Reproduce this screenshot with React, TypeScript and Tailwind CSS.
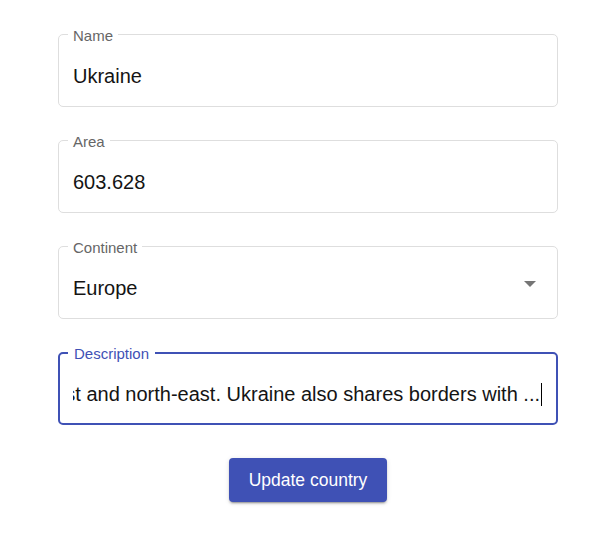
import { useState } from "react";

const fields = [
  { label: "Name", value: "Ukraine" },
  { label: "Area", value: "603.628" },
];

const description =
  "Ukraine is a country in Eastern Europe. It is the second-largest country in Europe after Russia, which borders it to the east and north-east. Ukraine also shares borders with ...";

const Field = ({ label, children, focused }: { label: string; children: React.ReactNode; focused?: boolean }) => {
  return (
    <div
      className={
        focused
          ? "relative h-[73px] rounded-[5px] border-2 border-[#3f51b5] pl-[13px] pr-[14px] pt-[28px]"
          : "relative h-[73px] rounded-[5px] border border-[#dedede] pl-[14px] pr-[15px] pt-[29px]"
      }
    >
      <label
        className={
          focused
            ? "absolute left-[8px] top-[-9px] bg-white px-[6px] text-[15px] leading-[18px] text-[#3f51b5]"
            : "absolute left-[9px] top-[-8px] bg-white px-[5px] text-[15px] leading-[18px] text-[#666666]"
        }
      >
        {label}
      </label>
      {children}
    </div>
  );
};

export default function App() {
  const [continent] = useState("Europe");
  return (
    <main className="min-h-[538px] bg-white pt-[34px] font-['Liberation_Sans',Arial,sans-serif]">
      <form className="ml-[58px] flex w-[500px] flex-col gap-[33px]">
        {fields.map((f) => (
          <Field key={f.label} label={f.label}>
            <div className="text-[20px] leading-[24px] text-[#141414]">{f.value}</div>
          </Field>
        ))}

        <Field label="Continent">
          <div className="flex items-center justify-between">
            <div className="text-[20px] leading-[24px] text-[#141414]">{continent}</div>
            <svg width="12" height="6" viewBox="0 0 12 6" className="mr-[6px] mt-[-9px]">
              <polygon points="0,0 12,0 6,6" fill="#757575" />
            </svg>
          </div>
        </Field>

        <Field label="Description" focused>
          <div className="flex items-center">
            <div className="flex flex-1 justify-end overflow-hidden whitespace-nowrap text-[20px] leading-[24px] text-[#141414]">
              <span>{description}</span>
            </div>
            <span className="ml-[1px] h-[23px] w-[1px] bg-black" />
          </div>
        </Field>

        <div className="flex justify-center">
          <button
            type="button"
            className="h-[44px] w-[158px] rounded-[4px] bg-[#3f51b5] text-[17.5px] text-white shadow-[0_3px_1px_-2px_rgba(0,0,0,0.2),0_2px_2px_0_rgba(0,0,0,0.14),0_1px_5px_0_rgba(0,0,0,0.12)]"
          >
            Update country
          </button>
        </div>
      </form>
    </main>
  );
}
